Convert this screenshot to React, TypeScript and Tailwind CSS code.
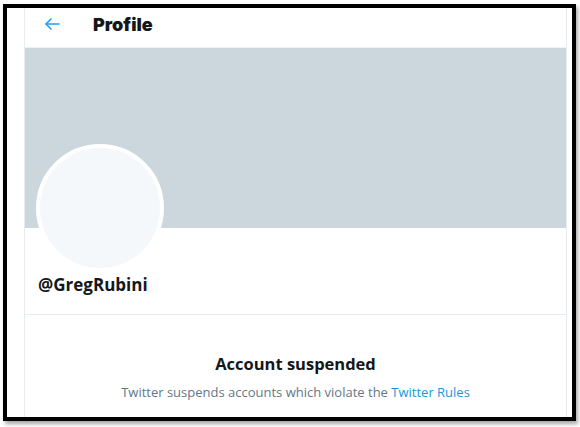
import React from "react";

export default function App() {
  return (
    <div className="w-[580px] h-[427px] bg-white overflow-hidden pt-[4px] pl-[3px]" style={{ fontFamily: '"Open Sans", "Noto Sans", sans-serif' }}>
      <div className="w-[573px] h-[417px] border-[4px] border-black bg-white shadow-[2px_3px_4px_rgba(0,0,0,0.35)] overflow-hidden">
        <div className="ml-[17px] w-[543px] h-full border-x border-[#e6ecf0] flex flex-col">
          {/* Header */}
          <div className="h-[40px] flex items-start pt-[5px] border-b border-[#eef1f3] shrink-0">
            <div className="ml-[19px] mt-[3px] w-[16px] h-[16px] flex items-center">
              <svg viewBox="0 0 16 16" width="16" height="16" fill="none" stroke="#1da1f2" strokeWidth="1.6" strokeLinecap="round" strokeLinejoin="round">
                <path d="M15 8H2" />
                <path d="M7 3L2 8l5 5" />
              </svg>
            </div>
            <div className="ml-[33px] text-[18px] font-black text-[#14171a] leading-[24px]" style={{ fontFamily: 'Inter, "Noto Sans", sans-serif' }}>
              Profile
            </div>
          </div>
          {/* Banner */}
          <div className="h-[180px] bg-[#ccd6dd] shrink-0" />
          {/* Avatar + name */}
          <div className="pl-[11px] border-b border-[#e6ecf0] pb-[17px] shrink-0">
            <div className="-mt-[84px] w-[128px] h-[128px] rounded-full bg-[#f5f8fa] border-[4px] border-white" />
            <div className="mt-[1px] ml-[2px] text-[17px] font-bold text-[#14171a] leading-[24px]">@GregRubini</div>
          </div>
          {/* Suspended */}
          <div className="flex flex-col items-center pt-[38px]">
            <div className="text-[16.5px] font-bold text-[#14171a] leading-[22px]">Account suspended</div>
            <div className="mt-[8px] text-[13px] text-[#657786] leading-[18px]">
              Twitter suspends accounts which violate the <span className="text-[#1b95e0]">Twitter Rules</span>
            </div>
          </div>
        </div>
      </div>
    </div>
  );
}
